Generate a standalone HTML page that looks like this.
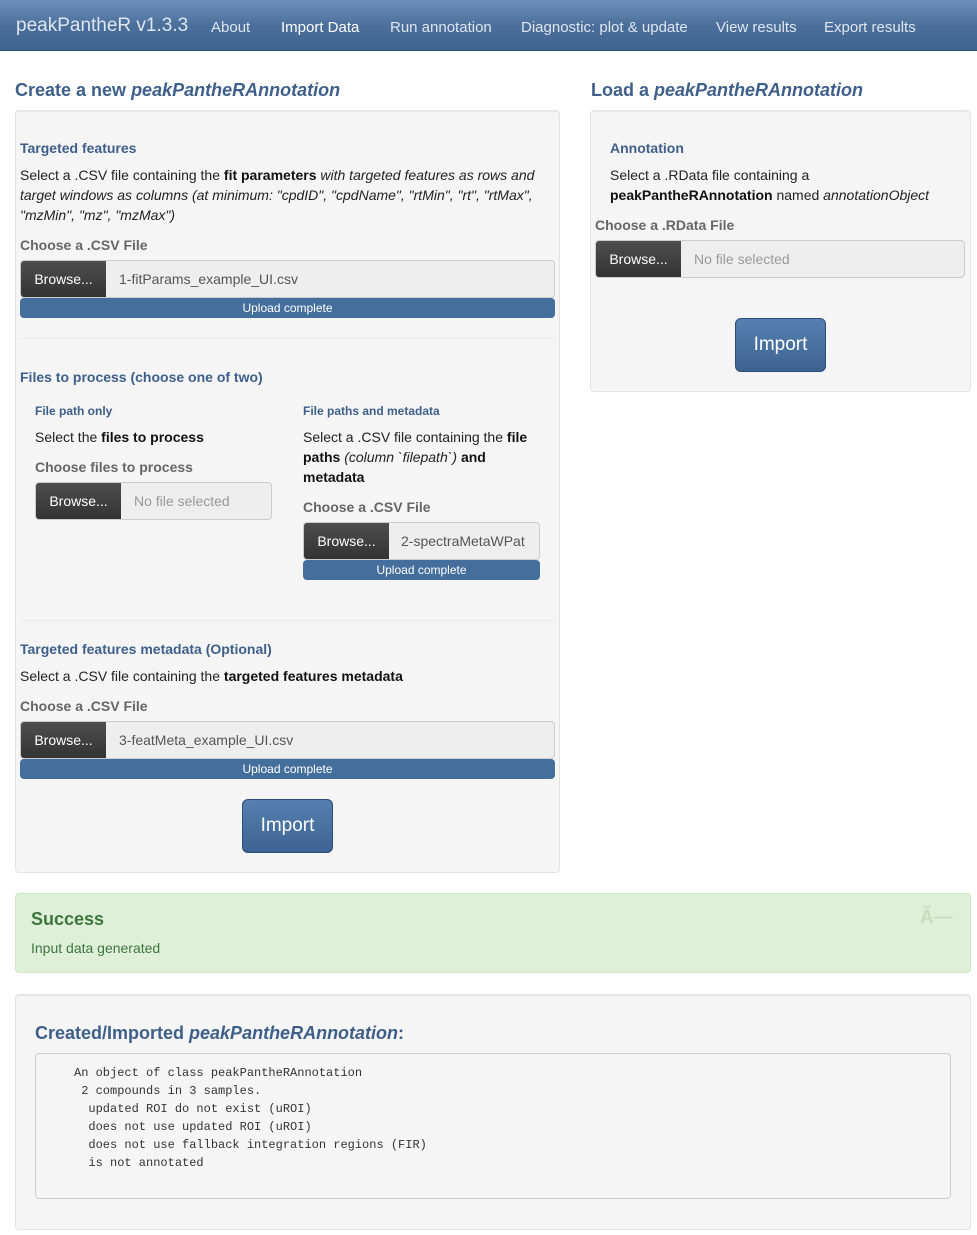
<!DOCTYPE html>
<html><head><meta charset="utf-8"><style>
*{box-sizing:border-box;margin:0;padding:0}
body{width:977px;height:1235px;position:relative;background:#fff;font-family:"Liberation Sans",sans-serif;font-size:14px;color:#333;overflow:hidden}
.a{position:absolute;white-space:nowrap}
.nav{position:absolute;left:0;top:0;width:977px;height:51px;background:linear-gradient(#6d8fbb,#4c6f9c 50%,#3f6390);border-bottom:1px solid #2e4d75}
.nav span{position:absolute;top:19px;color:#dfe6ef;font-size:15px}
h3{position:absolute;font-size:18px;font-weight:bold;color:#3e5f8a;white-space:nowrap}
.well{position:absolute;background:#f5f5f5;border:1px solid #e3e3e3;border-radius:4px;box-shadow:inset 0 1px 1px rgba(0,0,0,.05)}
.h4{position:absolute;font-weight:bold;color:#3e5f8a;font-size:14px;white-space:nowrap}
.h5{position:absolute;font-weight:bold;color:#3e5f8a;font-size:12px;white-space:nowrap}
.lbl{position:absolute;font-weight:bold;color:#666;font-size:14px;white-space:nowrap}
.fi{position:absolute;height:38px;border:1px solid #ccc;border-radius:4px;background:#eee;overflow:hidden}
.fi .b{position:absolute;left:0;top:0;bottom:0;width:85px;background:linear-gradient(#4e4e4e,#333);color:#fff;font-size:14px;line-height:36px;text-align:center}
.fi .t{position:absolute;left:98px;top:0;line-height:36px;color:#555;font-size:14px;white-space:nowrap}
.fi .t.g{color:#999}
.up{position:absolute;height:20px;background:#446e9b;border-radius:4px;color:#fff;font-size:12px;text-align:center;line-height:20px}
.imp{position:absolute;width:91px;height:54px;border:1px solid #2e4d75;border-radius:6px;background:linear-gradient(#5580b0,#3d6391);color:#fff;font-size:19px;text-align:center;line-height:52px}
p.a{font-size:14px;color:#222;line-height:20px}
b{color:#111}
.hr{position:absolute;height:1px;background:#eaeaea}
</style></head><body>
<div class="nav">
<span style="left:16px;top:15px;font-size:19px">peakPantheR v1.3.3</span>
<span style="left:211px">About</span>
<span style="left:281px;color:#fff">Import Data</span>
<span style="left:390px">Run annotation</span>
<span style="left:521px">Diagnostic: plot &amp; update</span>
<span style="left:716px">View results</span>
<span style="left:824px">Export results</span>
</div>

<h3 style="left:15px;top:80px">Create a new <i>peakPantheRAnnotation</i></h3>
<h3 style="left:591px;top:80px">Load a <i>peakPantheRAnnotation</i></h3>

<div class="well" style="left:15px;top:110px;width:545px;height:763px"></div>
<div class="h4" style="left:20px;top:140px">Targeted features</div>
<p class="a" style="left:20px;top:165px">Select a .CSV file containing the <b>fit parameters</b> <i>with targeted features as rows and</i></p>
<p class="a" style="left:20px;top:185px"><i>target windows as columns (at minimum: "cpdID", "cpdName", "rtMin", "rt", "rtMax",</i></p>
<p class="a" style="left:20px;top:205px"><i>"mzMin", "mz", "mzMax")</i></p>
<div class="lbl" style="left:20px;top:237px">Choose a .CSV File</div>
<div class="fi" style="left:20px;top:260px;width:535px"><div class="b">Browse...</div><div class="t">1-fitParams_example_UI.csv</div></div>
<div class="up" style="left:20px;top:298px;width:535px">Upload complete</div>
<div class="hr" style="left:20px;top:338px;width:535px"></div>

<div class="h4" style="left:20px;top:369px">Files to process (choose one of two)</div>
<div class="h5" style="left:35px;top:404px">File path only</div>
<p class="a" style="left:35px;top:427px">Select the <b>files to process</b></p>
<div class="lbl" style="left:35px;top:459px">Choose files to process</div>
<div class="fi" style="left:35px;top:482px;width:237px"><div class="b">Browse...</div><div class="t g">No file selected</div></div>

<div class="h5" style="left:303px;top:404px">File paths and metadata</div>
<p class="a" style="left:303px;top:427px">Select a .CSV file containing the <b>file</b></p>
<p class="a" style="left:303px;top:447px"><b>paths</b> <i>(column `filepath`)</i> <b>and</b></p>
<p class="a" style="left:303px;top:467px"><b>metadata</b></p>
<div class="lbl" style="left:303px;top:499px">Choose a .CSV File</div>
<div class="fi" style="left:303px;top:522px;width:237px"><div class="b">Browse...</div><div class="t" style="left:97px">2-spectraMetaWPat</div></div>
<div class="up" style="left:303px;top:560px;width:237px">Upload complete</div>
<div class="hr" style="left:20px;top:620px;width:535px"></div>

<div class="h4" style="left:20px;top:641px">Targeted features metadata (Optional)</div>
<p class="a" style="left:20px;top:666px">Select a .CSV file containing the <b>targeted features metadata</b></p>
<div class="lbl" style="left:20px;top:698px">Choose a .CSV File</div>
<div class="fi" style="left:20px;top:721px;width:535px"><div class="b">Browse...</div><div class="t">3-featMeta_example_UI.csv</div></div>
<div class="up" style="left:20px;top:759px;width:535px">Upload complete</div>
<div class="imp" style="left:242px;top:799px">Import</div>

<div class="well" style="left:590px;top:110px;width:381px;height:282px"></div>
<div class="h4" style="left:610px;top:140px">Annotation</div>
<p class="a" style="left:610px;top:165px">Select a .RData file containing a</p>
<p class="a" style="left:610px;top:185px"><b>peakPantheRAnnotation</b> named <i>annotationObject</i></p>
<div class="lbl" style="left:595px;top:217px">Choose a .RData File</div>
<div class="fi" style="left:595px;top:240px;width:370px"><div class="b">Browse...</div><div class="t g">No file selected</div></div>
<div class="imp" style="left:735px;top:318px">Import</div>

<div class="a" style="left:15px;top:893px;width:956px;height:80px;background:#dff0d8;border:1px solid #d0e6c4;border-radius:4px"></div>
<div class="a" style="left:31px;top:909px;font-size:18px;font-weight:bold;color:#3c763d">Success</div>
<div class="a" style="left:31px;top:940px;font-size:14px;color:#3c763d">Input data generated</div>
<div class="a" style="left:920px;top:907px;font-size:19px;font-weight:bold;color:#c5dcbc">Ã—</div>

<div class="well" style="left:15px;top:994px;width:956px;height:236px"></div>
<h3 style="left:35px;top:1023px">Created/Imported <i>peakPantheRAnnotation</i>:</h3>
<div class="a" style="left:35px;top:1053px;width:916px;height:146px;border:1px solid #ccc;border-radius:4px;background:#f5f5f5"></div>
<pre style="position:absolute;white-space:pre;left:74px;top:1064px;font-family:'Liberation Mono',monospace;font-size:12px;line-height:18px;color:#333">An object of class peakPantheRAnnotation
 2 compounds in 3 samples.
  updated ROI do not exist (uROI)
  does not use updated ROI (uROI)
  does not use fallback integration regions (FIR)
  is not annotated</pre>
</body></html>
